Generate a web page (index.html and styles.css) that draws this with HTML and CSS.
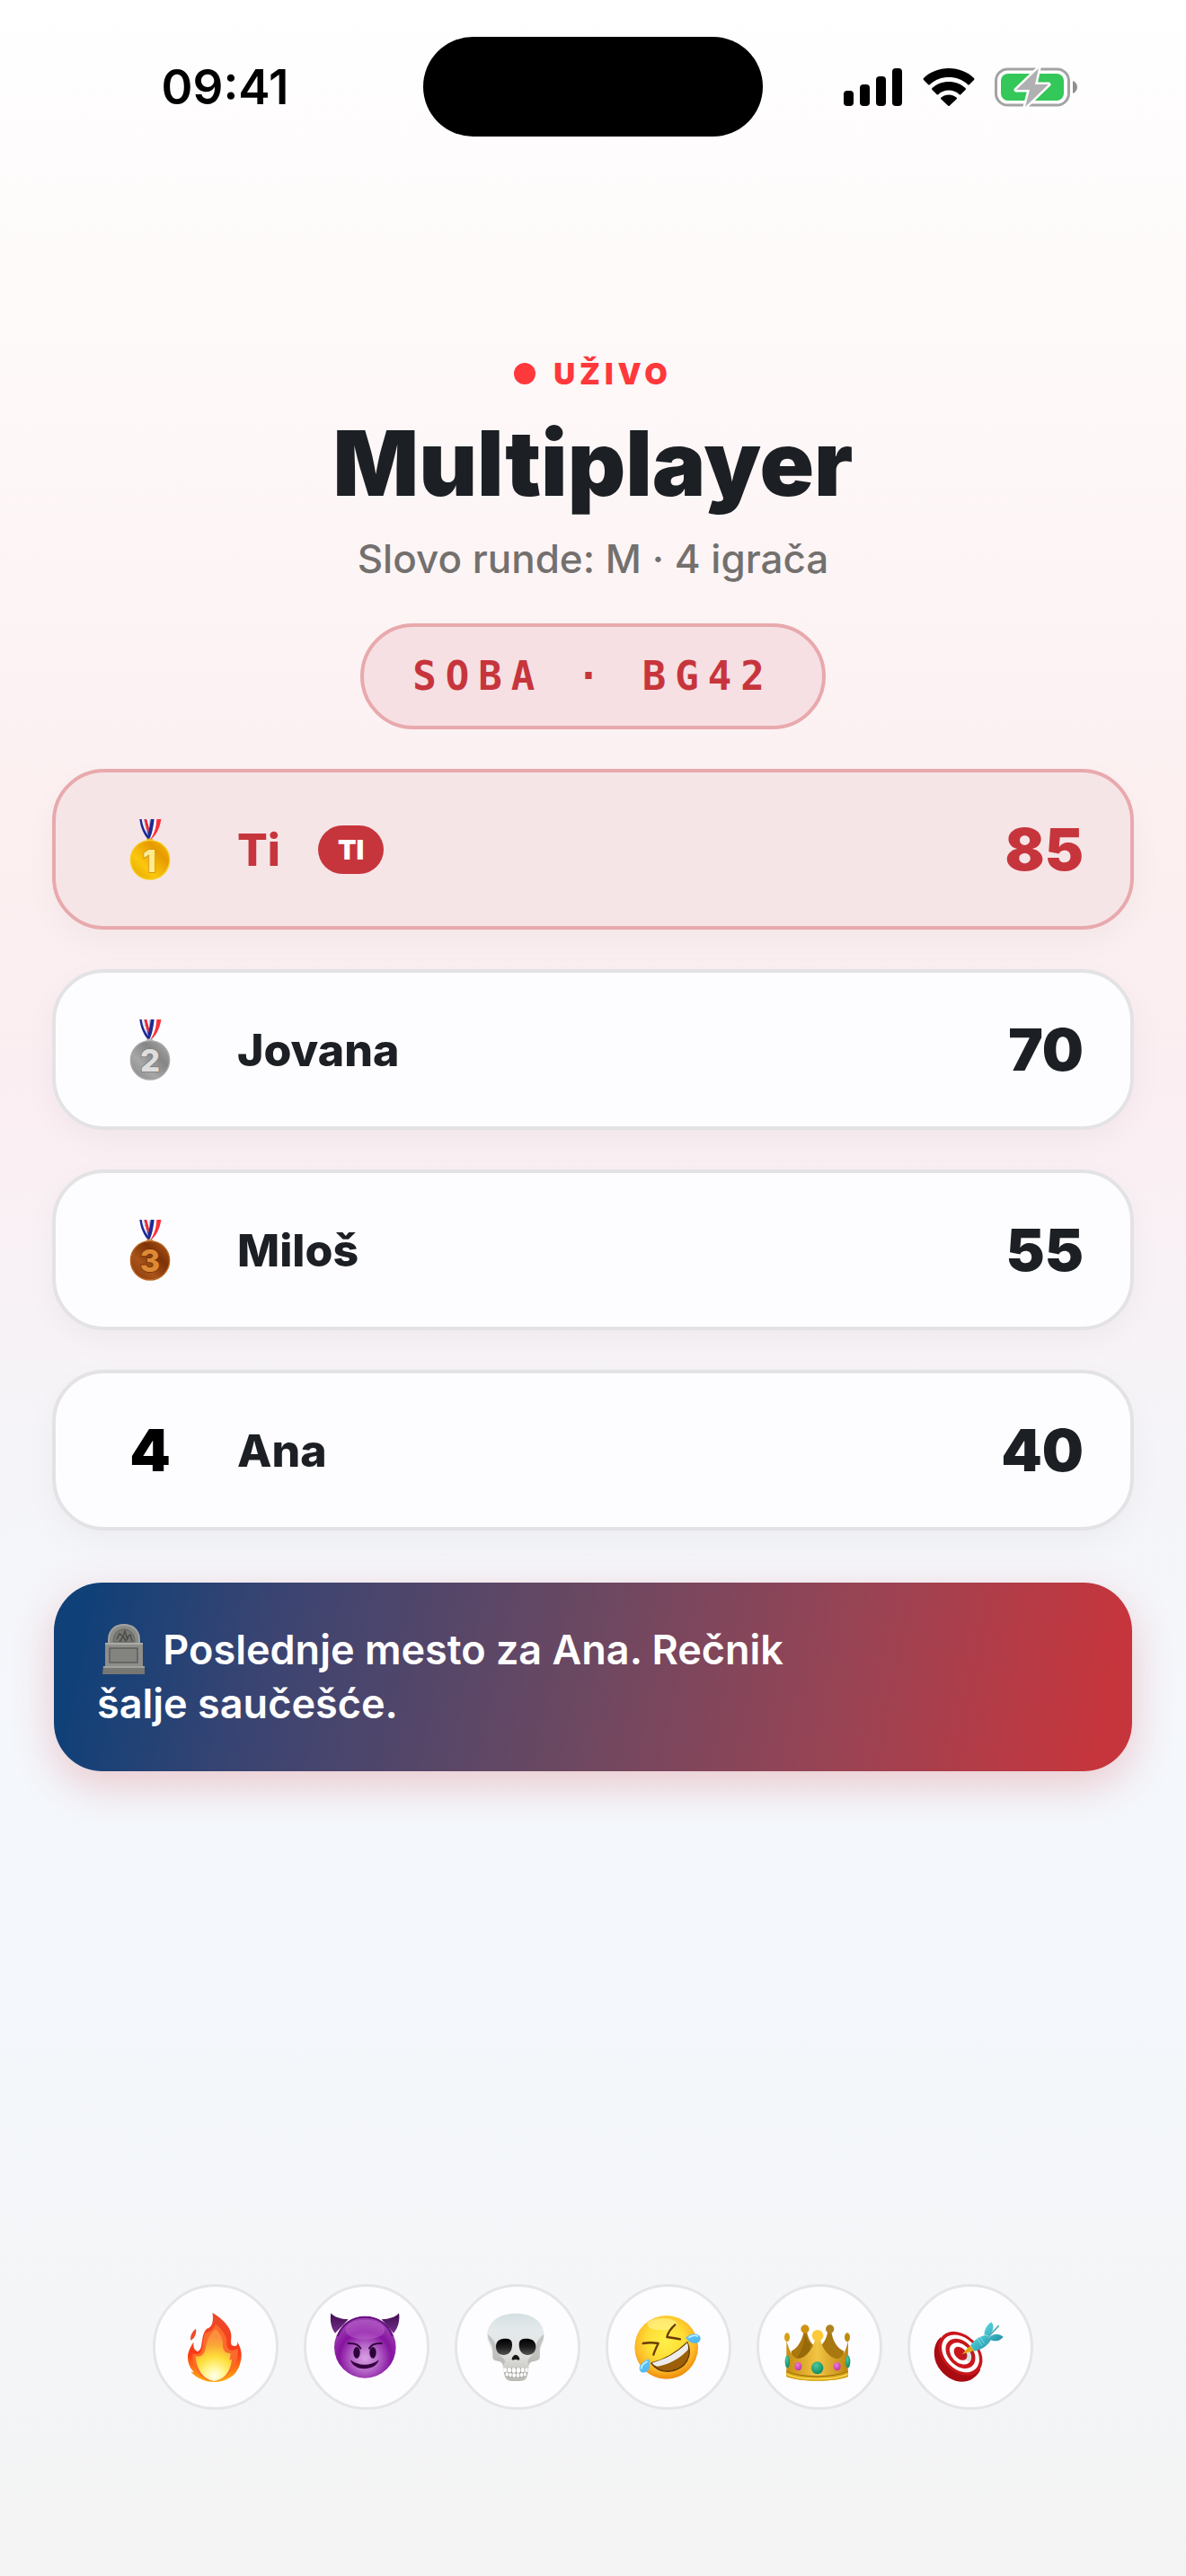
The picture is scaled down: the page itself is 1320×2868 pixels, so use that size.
FILE: index.html
```html
<!DOCTYPE html>
<html lang="sr-Latn">
<head>
  <meta charset="UTF-8" />
  <meta name="viewport" content="width=device-width, initial-scale=1.0"/>
  <title>Multiplayer</title>
  <link rel="stylesheet" href="styles.css">
</head>
<body>
  <div class="status-bar">
    <span class="time">09:41</span>
    <span class="island"></span>
    <div class="status-icons">
      <svg width="66" height="42" viewBox="0 0 66 42">
        <rect x="0" y="25" width="11" height="17" rx="4"/>
        <rect x="18" y="18" width="11" height="24" rx="4"/>
        <rect x="36" y="9" width="11" height="33" rx="4"/>
        <rect x="54" y="0" width="11" height="42" rx="4"/>
      </svg>
      <svg width="58" height="42" viewBox="0 0 58 42">
        <path d="M29 0C18 0 8 4 1 11q-1 1 0 2l5 5q1 1 2 0C14 12.500 21 10 29 10s15 2.500 21 8q1 1 2 0l5-5q1-1 0-2C50 4 40 0 29 0z"/>
        <path d="M29 15c-7 0-13.500 2.500-18.500 7q-1 1 0 2l5 5q1 1 2 0c3-3 7-4.500 11.500-4.500s8.500 1.500 11.500 4.500q1 1 2 0l5-5q1-1 0-2C42.500 17.500 36 15 29 15z"/>
        <path d="M29 29.500c-3 0-6 1-8.500 3q-1 1 0 2l7.500 7q1 1 2 0l7.500-7q1-1 0-2c-2.500-2-5.500-3-8.500-3z"/>
      </svg>
      <svg width="93" height="46" viewBox="0 0 93 46">
        <rect x="1.500" y="3" width="81" height="40" rx="13" fill="#fff" stroke="#a3a3a3" stroke-width="3"/>
        <path d="M87 16c3 1 5 4 5 7s-2 6-5 7z" fill="#8e8e93"/>
        <rect x="7" y="8" width="70" height="30" rx="8" fill="#34c759"/>
        <path d="M49 2 24 26h15l-5 19 26-25H45z" fill="#b0b0b3" stroke="#fff" stroke-width="5" stroke-linejoin="round" paint-order="stroke"/>
      </svg>
    </div>
  </div>

  <main class="room">
    <header class="room-header">
      <div class="live"><span class="live-dot"></span>UŽIVO</div>
      <h1>Multiplayer</h1>
      <p class="subtitle">Slovo runde: M · 4 igrača</p>
      <div class="room-code">SOBA · BG42</div>
    </header>

    <svg class="defs" aria-hidden="true">
      <defs>
        <linearGradient id="gold" x1="0" y1="1" x2="1" y2="0">
          <stop offset="0" stop-color="#e0a000"/>
          <stop offset=".35" stop-color="#fbc70c"/>
          <stop offset=".7" stop-color="#e79a00"/>
          <stop offset="1" stop-color="#f2b90a"/>
        </linearGradient>
        <linearGradient id="silver" x1="0" y1="1" x2="1" y2="0">
          <stop offset="0" stop-color="#848484"/>
          <stop offset=".35" stop-color="#a6a6a6"/>
          <stop offset=".65" stop-color="#858585"/>
          <stop offset="1" stop-color="#b0b0b0"/>
        </linearGradient>
        <linearGradient id="bronze" x1="0" y1="1" x2="1" y2="0">
          <stop offset="0" stop-color="#83350a"/>
          <stop offset=".35" stop-color="#a9531a"/>
          <stop offset=".65" stop-color="#7d3206"/>
          <stop offset="1" stop-color="#b35c1b"/>
        </linearGradient>
        <g id="ribbon">
          <path d="M123 63h32l-9 66h-6z" fill="#ef2b2d"/>
          <path d="M132 63h10l-2 30z" fill="#fff"/>
          <path d="M142 63h38c-4 26-14 50-32 67h-8c-6-18 4-44 2-67z" fill="#fff"/>
          <path d="M165 63h15c-4 28-15 52-33 67h-3c14-20 20-42 21-67z" fill="#fb3036"/>
          <path d="M145 63h12c-3 28-8 52-16 67l-7-14c6-17 9-34 11-53z" fill="#1d2a94"/>
          <path d="M108 63h15c4 24 10 44 17 58v9h-4c-16-18-25-42-28-67z" fill="#1d2a94"/>
          <path d="M115 63h8c4 24 9 42 15 56-12-15-20-34-23-56z" fill="#eef0ff"/>
        </g>
      </defs>
    </svg>

    <ol class="players">
      <li class="player me">
        <span class="rank">
          <svg width="48" height="70" viewBox="71 60 144 210">
            <use href="#ribbon"/>
            <path d="M131 133q11-7 22 0" fill="none" stroke="#e3ab14" stroke-width="4"/>
            <circle cx="143" cy="199" r="65" fill="url(#gold)" stroke="#f5cd1d" stroke-width="4"/>
            <text x="141" y="239" class="medal-num" fill="#fdeb92" stroke="#cf9406">1</text>
          </svg>
        </span>
        <span class="name">Ti</span>
        <span class="badge">TI</span>
        <span class="score">85</span>
      </li>
      <li class="player">
        <span class="rank">
          <svg width="48" height="70" viewBox="71 60 144 210">
            <use href="#ribbon"/>
            <path d="M131 133q11-7 22 0" fill="none" stroke="#b5b5b5" stroke-width="4"/>
            <circle cx="143" cy="199" r="65" fill="url(#silver)" stroke="#a9a9a9" stroke-width="4"/>
            <text x="143" y="236" class="medal-num" fill="#dedede" stroke="#7f7f7f">2</text>
          </svg>
        </span>
        <span class="name">Jovana</span>
        <span class="score">70</span>
      </li>
      <li class="player">
        <span class="rank">
          <svg width="48" height="70" viewBox="71 60 144 210">
            <use href="#ribbon"/>
            <path d="M131 133q11-7 22 0" fill="none" stroke="#d08a3a" stroke-width="4"/>
            <circle cx="143" cy="199" r="65" fill="url(#bronze)" stroke="#b9641f" stroke-width="4"/>
            <text x="143" y="236" class="medal-num" fill="#de8a35" stroke="#733006">3</text>
          </svg>
        </span>
        <span class="name">Miloš</span>
        <span class="score">55</span>
      </li>
      <li class="player">
        <span class="rank">4</span>
        <span class="name">Ana</span>
        <span class="score">40</span>
      </li>
    </ol>

    <div class="banner">
      <p>
        <svg class="tomb" width="62" height="56" viewBox="0 0 62 56">
          <path d="M13 22V18C13 7 20 1 30 1s17 6 17 17v4z" fill="#8b8b88" stroke="#a3a3a0" stroke-width="2"/>
          <path d="M18 20c0-9 5-14 12-14s12 5 12 14z" fill="#777774" stroke="#62625f"/>
          <path d="M22 17l3-6 4 3 2-6 2 7 4-3 2 7M25 20l4-6 3 5 3-4" fill="none" stroke="#4b4b49" stroke-width="1.500"/>
          <rect x="9" y="21" width="42" height="27" fill="#8e8e8a"/>
          <path d="M9 22h42" stroke="#aaaaa6" stroke-width="2"/>
          <rect x="14" y="27" width="31" height="16" fill="#83837f" stroke="#5d5d5a" stroke-width="1.500"/>
          <path d="M7 47h46v9H6z" fill="#777773"/>
          <path d="M7 48h46" stroke="#a1a19d" stroke-width="2"/>
        </svg>
        Poslednje mesto za Ana. Rečnik šalje saučešće.
      </p>
    </div>

    <div class="reactions">
      <button type="button" aria-label="Vatra">
        <svg viewBox="120 128 240 240">
          <defs>
            <linearGradient id="flame" x1="0" y1="0" x2="0" y2="1">
              <stop offset="0" stop-color="#ea4a2c"/>
              <stop offset=".6" stop-color="#fb3a17"/>
              <stop offset="1" stop-color="#ffae0c"/>
            </linearGradient>
            <radialGradient id="ember" gradientUnits="userSpaceOnUse" cx="236" cy="345" r="130">
              <stop offset="0" stop-color="#fffff0"/>
              <stop offset=".22" stop-color="#fff79a"/>
              <stop offset=".5" stop-color="#fede3a"/>
              <stop offset=".8" stop-color="#fba637"/>
              <stop offset="1" stop-color="#fb9040"/>
            </radialGradient>
          </defs>
          <path d="M174 187c-10 8-21 22-17 39 12-8 20-20 17-39z" fill="#f04a2c"/>
          <path d="M229 133c30 18 62 46 63 77 1 14-4 24 3 33 10 6 21 0 17-13 14 22 18 48 10 72-3 12-8 22-16 33l-6 6c-18 16-40 24-64 24-28 0-52-10-68-24l-11-10 11 2c-12-12-20-28-21-48-1-19 9-37 20-54-3 14 0 28 12 32 12-3 13-18 16-37 2-15 6-30 15-39 16-2 25-22 19-55z" fill="url(#flame)"/>
          <path d="M240 172c22 16 38 40 37 62 0 14 6 24 16 25 10 1 18-3 21-8 3 26-4 52-22 74-14 20-32 36-56 37-26 0-46-14-58-33-12-16-17-34-14-60 10 6 25 5 30-12 6-22 4-44 12-56 14-4 26-10 34-29z" fill="#fb6a2b"/>
          <path d="M240 188c18 18 26 36 24 54 0 18 10 28 26 27-2 22-6 34-16 52-10 20-20 36-38 41-24-3-42-18-51-38-8-15-12-30-12-46 16 6 29-4 33-24 4-24 10-46 34-66z" fill="url(#ember)"/>
          <path d="M238 237c-8 14-18 20-26 34-8 14-4 22-12 26-8-2-12-8-20-8 8 42 28 68 56 72 32-4 54-30 58-72-8 2-14 8-20 6-10-14-22-32-36-58z" fill="url(#ember)"/>
        </svg>
      </button>
      <button type="button" aria-label="Đavo">
        <svg viewBox="624 128 240 240">
          <defs>
            <radialGradient id="devil" gradientUnits="userSpaceOnUse" cx="739" cy="285" r="125">
              <stop offset="0" stop-color="#d9a0e4"/>
              <stop offset=".35" stop-color="#b668c8"/>
              <stop offset=".7" stop-color="#86139f"/>
              <stop offset="1" stop-color="#9a3fae"/>
            </radialGradient>
            <linearGradient id="horn" x1="0" y1="0" x2="0" y2="1">
              <stop offset="0" stop-color="#3f0c50"/>
              <stop offset="1" stop-color="#75308a"/>
            </linearGradient>
          </defs>
          <path d="M625 135c12 14 32 20 58 21l-44 46c-14-18-18-44-14-67zM852 135c-12 14-32 20-58 21l40 46c16-18 22-44 18-67z" fill="url(#horn)"/>
          <circle cx="739" cy="249" r="103" fill="url(#devil)"/>
          <path d="M648 212c14-40 48-64 91-64s77 24 91 64" fill="none" stroke="#671081" stroke-width="6"/>
          <ellipse cx="739" cy="190" rx="66" ry="33" fill="#c06bd2" opacity=".45"/>
          <ellipse cx="711" cy="267" rx="11" ry="19" fill="#2d033b"/>
          <ellipse cx="765" cy="267" rx="11" ry="19" fill="#2d033b"/>
          <path d="M683 236c16-1 34 3 41 17M794 236c-16-1-34 3-41 17" fill="none" stroke="#34033f" stroke-width="6" stroke-linecap="round"/>
          <path d="M690 291c26 22 69 22 95 0-9 38-84 42-95 0z" fill="#34033f"/>
        </svg>
      </button>
      <button type="button" aria-label="Lobanja">
        <svg viewBox="108 128 240 240">
          <defs>
            <linearGradient id="bone" x1="0" y1="0" x2="0" y2="1">
              <stop offset="0" stop-color="#d5dfe2"/>
              <stop offset=".25" stop-color="#e4eaec"/>
              <stop offset=".6" stop-color="#e2e2e1"/>
              <stop offset="1" stop-color="#b9b9b4"/>
            </linearGradient>
            <linearGradient id="socket" x1="0" y1="0" x2="0" y2="1">
              <stop offset="0" stop-color="#000"/>
              <stop offset=".5" stop-color="#1b1b1b"/>
              <stop offset="1" stop-color="#565656"/>
            </linearGradient>
          </defs>
          <path d="M222 136c58 0 95 30 95 75 0 20-12 34-14 50-1 16 3 28-8 32-14 5-26 2-29 16-3 16-1 30-8 42-7 12-18 11-36 11s-28 0-35-12c-6-12-4-26-8-40-4-14-14-13-26-16-12-4-8-18-10-32-2-18-16-30-16-51 0-45 37-75 95-75z" fill="url(#bone)"/>
          <path d="M128 205c3 26 16 30 17 54 2 18-2 28 8 33 14 4 25 4 28 17 14-20-6-24-14-36-12-20-6-42-39-68zM316 205c-2 28-14 34-14 54 0 18 4 28-8 33-14 5-24 2-28 17-10-18 4-24 12-36 12-20 6-42 38-68z" fill="#a5a5a0" opacity=".55"/>
          <path d="M156 246c0-20 16-26 30-26 17 0 24 5 24 20 0 22-10 35-28 35-16 0-26-10-26-29zM289 246c0-20-16-26-31-26-17 0-25 5-25 20 0 22 11 35 29 35 16 0 27-10 27-29z" fill="url(#socket)"/>
          <path d="M222 274c7 0 14 10 13 16-5 4-9-1-13-1s-8 5-13 1c-1-6 6-16 13-16z" fill="#171717"/>
          <path d="M182 320c24-4 58-4 81 0l-6 27c-22 4-46 4-69 0z" fill="#9f9f9b"/>
          <g fill="#fff">
            <rect x="181" y="318" width="11" height="14" rx="4"/>
            <rect x="194" y="318" width="13" height="15" rx="4"/>
            <rect x="209" y="318" width="13" height="16" rx="4"/>
            <rect x="224" y="318" width="13" height="16" rx="4"/>
            <rect x="239" y="318" width="12" height="15" rx="4"/>
            <rect x="253" y="318" width="10" height="14" rx="4"/>
            <rect x="188" y="333" width="9" height="13" rx="4"/>
            <rect x="199" y="335" width="10" height="13" rx="4"/>
            <rect x="211" y="336" width="11" height="13" rx="4"/>
            <rect x="224" y="336" width="11" height="13" rx="4"/>
            <rect x="237" y="335" width="10" height="13" rx="4"/>
            <rect x="249" y="333" width="8" height="13" rx="4"/>
          </g>
        </svg>
      </button>
      <button type="button" aria-label="Smeh">
        <svg viewBox="613 128 240 240">
          <defs>
            <radialGradient id="smile" gradientUnits="userSpaceOnUse" cx="722" cy="228" r="125">
              <stop offset="0" stop-color="#fff04a"/>
              <stop offset=".5" stop-color="#fedd35"/>
              <stop offset=".8" stop-color="#fdb827"/>
              <stop offset="1" stop-color="#ef8d0a"/>
            </radialGradient>
            <linearGradient id="tear" x1="0" y1="0" x2="1" y2="1">
              <stop offset="0" stop-color="#8adcfb"/>
              <stop offset="1" stop-color="#239de8"/>
            </linearGradient>
          </defs>
          <circle cx="726" cy="249" r="106" fill="url(#smile)"/>
          <ellipse cx="712" cy="172" rx="50" ry="20" fill="#fff79a" opacity=".6"/>
          <path d="M755 174c-14 12-24 26-27 41 14 2 28 3 44 7M648 236c17-3 34-3 51 0-6 12-12 24-16 38" fill="none" stroke="#6b3b05" stroke-width="7" stroke-linejoin="round" stroke-linecap="round"/>
          <path d="M676 302c46-12 84-34 120-70 14 32 6 66-22 84-30 20-74 20-98-14z" fill="#9b5f08" stroke="#5f3503" stroke-width="4" stroke-linejoin="round"/>
          <path d="M678 301c46-12 84-34 118-67 3 9 4 16 2 23-30 32-64 50-102 56-8-2-14-6-18-12z" fill="#ececec"/>
          <path d="M669 288c-18 4-34 18-33 34 2 12 16 15 25 8 12-9 12-26 8-42zM790 217c14-13 34-17 45-8 9 9 5 22-8 26-14 3-28-6-37-18z" fill="url(#tear)"/>
          <path d="M661 297c-10 5-18 14-19 23M802 216c10-6 20-8 28-4" fill="none" stroke="#c6f1ff" stroke-width="5" stroke-linecap="round"/>
        </svg>
      </button>
      <button type="button" aria-label="Kruna">
        <svg viewBox="126 128 240 240">
          <defs>
            <linearGradient id="crown" x1="0" y1="0" x2="1" y2="0">
              <stop offset="0" stop-color="#c88c12"/>
              <stop offset=".5" stop-color="#f3c544"/>
              <stop offset="1" stop-color="#bd8411"/>
            </linearGradient>
            <radialGradient id="green" cx=".4" cy=".3" r=".8">
              <stop offset="0" stop-color="#4bc9a0"/>
              <stop offset="1" stop-color="#07805a"/>
            </radialGradient>
            <radialGradient id="pink" cx=".4" cy=".3" r=".8">
              <stop offset="0" stop-color="#ef7ddb"/>
              <stop offset="1" stop-color="#b82aa0"/>
            </radialGradient>
          </defs>
          <path d="M152 262c20-10 36-34 42-66h10c4 22 12 36 22 46v54h-70zM328 262c-22-10-38-34-42-66h-12c-4 22-12 36-22 46v54h70z" fill="#a9780e"/>
          <path d="M197 198c2 18 10 32 20 42l-10 44h-36c16-20 26-50 26-86z" fill="#8e5f07" opacity=".6"/>
          <circle cx="198" cy="188" r="14" fill="#d09212"/>
          <circle cx="281" cy="188" r="14" fill="#b0811c"/>
          <path d="M136 228c10 34 22 60 40 60 26-6 48-32 56-68h16c8 36 30 62 56 68 18 0 30-26 38-60l-1 118c-50 20-154 20-205 0z" fill="url(#crown)"/>
          <circle cx="240" cy="210" r="19" fill="#fcca39"/>
          <ellipse cx="138" cy="216" rx="9" ry="15" fill="#d6a016"/>
          <ellipse cx="339" cy="216" rx="9" ry="15" fill="#bd8b12"/>
          <path d="M136 326c46 24 158 24 206 0v22c-46 18-158 18-206 0z" fill="#d6a41c"/>
          <path d="M136 329c46 23 158 23 206 0" fill="none" stroke="#9c6b08" stroke-width="3"/>
          <path d="M137 339c46 21 156 21 204 0" fill="none" stroke="#ffe04e" stroke-width="4"/>
          <ellipse cx="139" cy="297" rx="8" ry="21" fill="url(#green)"/>
          <ellipse cx="341" cy="297" rx="8" ry="21" fill="url(#green)"/>
          <ellipse cx="175" cy="313" rx="12" ry="14" fill="url(#pink)"/>
          <ellipse cx="305" cy="313" rx="12" ry="14" fill="url(#pink)"/>
          <ellipse cx="239" cy="318" rx="20" ry="21" fill="url(#green)"/>
        </svg>
      </button>
      <button type="button" aria-label="Meta">
        <svg viewBox="630 128 240 240">
          <defs>
            <linearGradient id="dart" x1="0" y1="0" x2="1" y2="1">
              <stop offset="0" stop-color="#5ddbe6"/>
              <stop offset="1" stop-color="#1f8fa2"/>
            </linearGradient>
          </defs>
          <path d="M650 216c-24 20-28 66-8 98 24 38 62 56 94 49 22-5 40-22 48-40z" fill="#a80c12"/>
          <g transform="rotate(45 717 270)">
            <ellipse cx="717" cy="270" rx="84" ry="61" fill="#c9161c"/>
            <ellipse cx="717" cy="270" rx="72" ry="52" fill="#fff"/>
            <ellipse cx="717" cy="270" rx="57" ry="41" fill="#c9161c"/>
            <ellipse cx="717" cy="270" rx="42" ry="30" fill="#fff"/>
            <ellipse cx="717" cy="270" rx="26" ry="18" fill="#c9161c"/>
          </g>
          <path d="M720 274l36-12 8 18-20 18z" fill="#444" opacity=".18"/>
          <path d="M722 272l22-23 6-4 12 12-6 5z" fill="#e0aa14"/>
          <path d="M750 243c10-16 28-30 52-35l16 17c-10 18-28 32-54 37z" fill="url(#dart)"/>
          <path d="M808 216l36-38" stroke="#5aa9b2" stroke-width="5" stroke-linecap="round"/>
          <path d="M796 206c2-18 10-32 24-41 10 12 9 26-8 48zM812 216c14-14 34-14 48-2-12 16-30 18-50 8z" fill="url(#dart)"/>
          <path d="M773 220l16 24M782 215l15 22" stroke="#9beff4" stroke-width="2"/>
        </svg>
      </button>
    </div>
  </main>
</body>
</html>
```
FILE: styles.css
```css
:root {
  --ink: #1c1f23;
  --red: #c7353c;
  --live: #ff383c;
  --muted: #73706e;
  --border: #e3e2e5;
  --red-border: #e8a9ad;
  --card: #fdfdff;
}

body {
  font-family: Inter, "Liberation Sans", sans-serif;
  color: var(--ink);
  background: linear-gradient(180deg, #ffffff 0%, #fceff0 34%, #fbeef2 42%, #f5f5f9 57%, #f4f8fd 72%, #f4f4f4 100%);
  margin: 0;
  min-height: 100vh;
  display: flex;
  flex-direction: column;
}

.status-bar {
  display: grid;
  grid-template-columns: 1fr 378px 1fr;
  align-items: center;
  justify-items: center;
  padding: 41px 30px 0;
  color: #000;
}

.time {
  font-size: 53px;
  font-weight: 600;
}

.island {
  width: 100%;
  height: 111px;
  border-radius: 56px;
  background-color: #000;
}

.status-icons {
  display: flex;
  align-items: center;
  gap: 22px;
}

.room {
  flex: 1;
  display: flex;
  flex-direction: column;
  padding: 244px 58px 185px;
}

.room-header {
  display: flex;
  flex-direction: column;
  align-items: center;
}

.live {
  display: flex;
  align-items: center;
  gap: 20px;
  font-size: 33px;
  line-height: 40px;
  font-weight: 900;
  letter-spacing: 5px;
  color: var(--live);
}

.live-dot {
  width: 24px;
  height: 24px;
  border-radius: 50%;
  background-color: var(--live);
}

h1 {
  margin: 20px 0 18px;
  font-size: 100px;
  line-height: 120px;
  font-weight: 900;
}

.subtitle {
  margin: 0;
  font-size: 44px;
  line-height: 56px;
  font-weight: 500;
  color: var(--muted);
}

.room-code {
  margin: 44px 0;
  padding: 0 54px;
  border: 4px solid var(--red-border);
  border-radius: 60px;
  background-color: #f6e0e3;
  color: var(--red);
  font-family: "DejaVu Sans Mono", monospace;
  font-size: 44px;
  line-height: 110px;
  font-weight: 700;
  letter-spacing: 10px;
}

.defs {
  position: absolute;
  width: 0;
  height: 0;
}

.players {
  list-style: none;
  margin: 0;
  padding: 0;
  display: flex;
  flex-direction: column;
  gap: 44px;
}

.player {
  display: flex;
  align-items: center;
  height: 171px;
  padding: 0 52px 0 55px;
  border: 4px solid var(--border);
  border-radius: 58px;
  background-color: var(--card);
  box-shadow: 0 12px 36px rgba(0, 0, 0, 0.04);
}

.player.me {
  border-color: var(--red-border);
  background-color: #f6e5e7;
}

.rank {
  display: flex;
  justify-content: center;
  width: 100px;
  margin-right: 47px;
  font-size: 65px;
  font-weight: 900;
  color: #000;
}

.medal-num {
  font-size: 104px;
  font-weight: 800;
  text-anchor: middle;
  stroke-width: 5px;
  paint-order: stroke;
}

.name {
  font-size: 50px;
  font-weight: 800;
}

.score {
  margin-left: auto;
  font-size: 65px;
  font-weight: 900;
}

.me .name,
.me .score {
  color: var(--red);
}

.badge {
  margin-left: 42px;
  padding: 0 22px;
  border-radius: 27px;
  background-color: var(--red);
  color: #fff;
  font-size: 30px;
  line-height: 54px;
  font-weight: 900;
}

.banner {
  margin: 58px 2px 0;
  padding: 45px 48px;
  border-radius: 54px;
  background: linear-gradient(102deg, #0f4078 3%, #3a4472 20%, #6a4862 48%, #974455 72%, #c7353c 97%);
  box-shadow: 0 16px 48px rgba(199, 53, 60, 0.24);
  color: #fff;
}

.banner p {
  margin: 0;
  max-width: 800px;
  font-size: 45px;
  line-height: 60px;
  font-weight: 600;
}

.tomb {
  vertical-align: -11px;
}

.reactions {
  display: flex;
  justify-content: center;
  gap: 28px;
  margin-top: auto;
}

.reactions button {
  width: 140px;
  height: 140px;
  padding: 0;
  display: flex;
  align-items: center;
  justify-content: center;
  border: 3px solid #e5e5e7;
  border-radius: 50%;
  background-color: var(--card);
  cursor: pointer;
}

.reactions svg {
  width: 80px;
  height: 80px;
  overflow: visible;
}
```
